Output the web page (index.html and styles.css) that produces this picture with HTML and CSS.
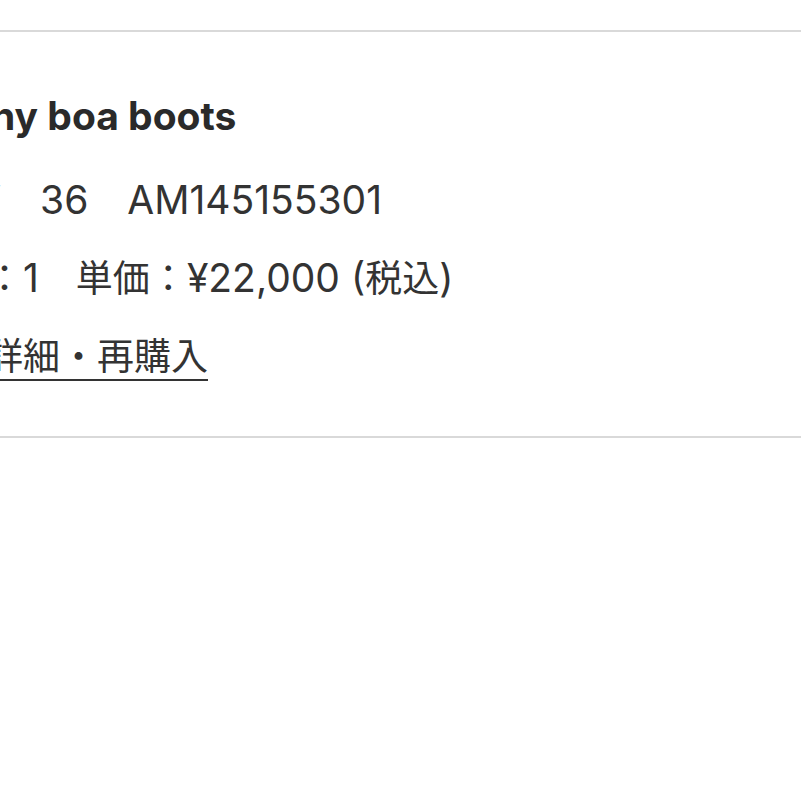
FILE: index.html
```html
<!DOCTYPE html>
<html lang="ja">
<head>
  <meta charset="UTF-8">
  <meta name="viewport" content="width=device-width, initial-scale=1.0">
  <title>注文履歴</title>
  <link rel="stylesheet" href="styles.css">
</head>
<body>
  <div class="order-item">
    <div class="item-info">
      <h3 class="item-name">Tawny boa boots</h3>
      <div class="item-row">BRW　36　AM145155301</div>
      <div class="item-row"><span class="ja">数量：</span>1<span class="ja">　単価：</span>¥22,000 (<span class="ja">税込</span>)</div>
      <div class="item-row"><a href="#" class="item-link ja">注文詳細・再購入</a></div>
    </div>
  </div>
</body>
</html>
```

FILE: styles.css
```css
body { margin: 0; background: #fff; font-family: Inter, "Noto Sans CJK JP", sans-serif; color: #333; }
.order-item { margin-top: 30px; border-top: 2px solid #d9d9d9; border-bottom: 2px solid #d9d9d9; padding: 60px 0 41px; overflow: hidden; }
.item-info { margin-left: -88px; white-space: nowrap; font-size: 39px; }
.item-name { margin: 0 0 21px; font-size: 39px; line-height: 48px; font-weight: 700; color: #2a2a2a; }
.item-row { line-height: 78px; }
.ja { font-family: "Noto Sans CJK JP", sans-serif; font-size: 37px; line-height: 1; }
.item-link { color: #333; text-decoration: underline; text-decoration-thickness: 2px; text-underline-offset: 9px; }
```
